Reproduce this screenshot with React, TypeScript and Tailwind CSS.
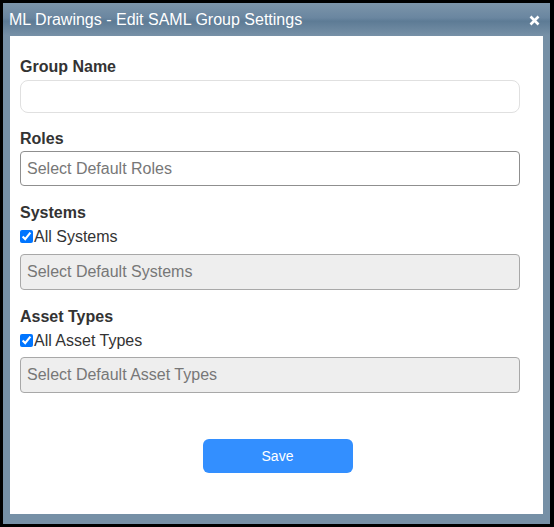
import * as React from 'react'

function Field({ label, children }: { label: string; children: React.ReactNode }) {
	return (
		<div className="flex flex-col">
			<label className="text-[16px] font-bold leading-[19px] text-[#333]">{label}</label>
			{children}
		</div>
	)
}

function CheckRow({ label }: { label: string }) {
	return (
		<label className="mt-[5px] flex h-[19px] items-center text-[16px] leading-[19px] text-[#333]">
			<input type="checkbox" defaultChecked className="m-0 mr-[1px] h-[13px] w-[13px] accent-[#0075ff]" />
			{label}
		</label>
	)
}

export default function App() {
	return (
		<div
			className="h-[527px] w-[554px] bg-black p-[3px] pr-[4px]"
			style={{ fontFamily: '"Liberation Sans", Arial, sans-serif' }}
		>
			<div className="flex h-full flex-col bg-[#7690a6]">
				<div className="flex h-[33px] items-center justify-between bg-[linear-gradient(#7c95aa,#6a86a0_45%,#5d7b95_55%,#7791a7)] pl-[6px] pr-[10px]">
					<span className="text-[16px] leading-[19px] text-white">ML Drawings - Edit SAML Group Settings</span>
					<svg width="11" height="11" viewBox="0 0 11 11" className="mt-[1px]">
						<path d="M1.5 1.5 L9.5 9.5 M9.5 1.5 L1.5 9.5" stroke="white" strokeWidth="2.6" />
					</svg>
				</div>
				<div className="mx-[7px] mb-[10px] flex flex-1 flex-col bg-white px-[10px] pt-[21px]">
					<Field label="Group Name">
						<input
							type="text"
							className="mt-[4px] h-[33px] w-[500px] rounded-[8px] border border-[#e0e0e0] px-[6px] text-[16px] outline-none"
						/>
					</Field>
					<div className="h-[16px]" />
					<Field label="Roles">
						<input
							type="text"
							placeholder="Select Default Roles"
							className="mt-[3px] h-[35px] w-[500px] rounded-[4px] border border-[#8f8f8f] px-[6px] text-[16px] text-[#333] outline-none placeholder:text-[#777]"
						/>
					</Field>
					<div className="h-[17px]" />
					<Field label="Systems">
						<CheckRow label="All Systems" />
						<input
							type="text"
							disabled
							placeholder="Select Default Systems"
							className="mt-[8px] h-[36px] w-[500px] rounded-[4px] border border-[#a8a8a8] bg-[#eeeeee] px-[6px] text-[16px] outline-none placeholder:text-[#777]"
						/>
					</Field>
					<div className="h-[17px]" />
					<Field label="Asset Types">
						<CheckRow label="All Asset Types" />
						<input
							type="text"
							disabled
							placeholder="Select Default Asset Types"
							className="mt-[7px] h-[36px] w-[500px] rounded-[4px] border border-[#a8a8a8] bg-[#eeeeee] px-[6px] text-[16px] outline-none placeholder:text-[#777]"
						/>
					</Field>
					<div className="mt-[46px] flex justify-center pl-[2px]">
						<button className="h-[34px] w-[150px] rounded-[6px] bg-[#338fff] text-[14px] font-medium text-white">
							Save
						</button>
					</div>
				</div>
			</div>
		</div>
	)
}
